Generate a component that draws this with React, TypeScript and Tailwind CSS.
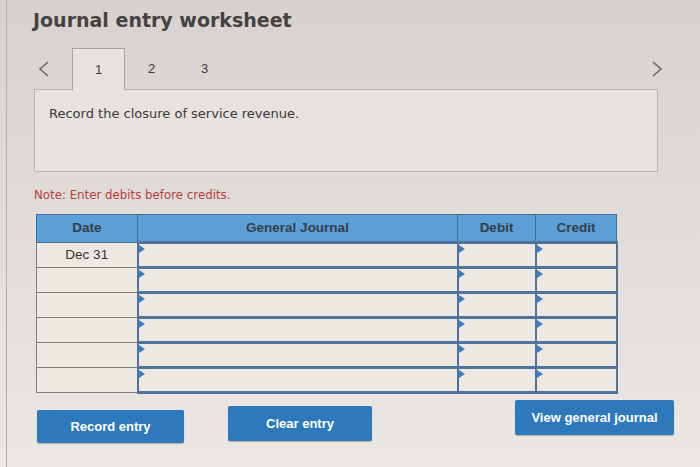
import React from "react";

const rows = ["Dec 31", "", "", "", "", ""];

function Flag() {
  return (
    <span className="absolute left-0 top-[1px] h-0 w-0 border-y-[4px] border-l-[6px] border-y-transparent border-l-[#3a7fc6]" />
  );
}

function Chevron({ dir }: { dir: "left" | "right" }) {
  return (
    <svg width="12" height="16" viewBox="0 0 12 16" className="shrink-0">
      <polyline
        points={dir === "left" ? "10,1 2,8 10,15" : "2,1 10,8 2,15"}
        fill="none"
        stroke="#6b6663"
        strokeWidth="1.6"
      />
    </svg>
  );
}

export default function App() {
  return (
    <div className="h-[467px] w-[700px] overflow-hidden bg-linear-to-b from-[#d8d2ce] to-[#ebe7e3] font-['DejaVu_Sans',sans-serif]">
      <div className="ml-[6px] h-full border-l border-[#b3ada9] pl-[27px]">
        <div className="w-[624px]">
          <h1 className="pt-[8px] text-[19px] font-bold leading-[24px] text-[#454240] -ml-[1px]">
            Journal entry worksheet
          </h1>

          {/* tabs */}
          <div className="relative z-10 mt-[16px] -mr-[6px] flex h-[41px] items-end">
            <div className="flex h-full w-[38px] items-center pl-[4px]">
              <Chevron dir="left" />
            </div>
            <div className="-mb-px flex h-[42px] w-[53px] items-center justify-center border border-b-0 border-[#a8a39f] bg-[#e6e2de] font-['Liberation_Sans',sans-serif] text-[13px] text-[#3d3a38]">
              1
            </div>
            <div className="flex h-full w-[53px] items-center justify-center font-['Liberation_Sans',sans-serif] text-[13px] text-[#3d3a38]">
              2
            </div>
            <div className="flex h-full w-[53px] items-center justify-center font-['Liberation_Sans',sans-serif] text-[13px] text-[#3d3a38]">
              3
            </div>
            <div className="flex-1" />
            <div className="flex h-full items-center pr-[1px]">
              <Chevron dir="right" />
            </div>
          </div>

          {/* question box */}
          <div className="h-[83px] border border-[#b9b4b0] bg-[#e6e2de] px-[14px] pt-[15px]">
            <p className="text-[13px] leading-[18px] text-[#3b3937]">
              Record the closure of service revenue.
            </p>
          </div>

          <p className="mt-[16px] text-[11.8px] leading-[14px] text-[#b9403f]">
            Note: Enter debits before credits.
          </p>

          {/* journal table */}
          <table className="ml-[2px] mt-[12px] w-[580px] table-fixed border-collapse font-['Liberation_Sans',sans-serif]">
            <colgroup>
              <col className="w-[101px]" />
              <col className="w-[320px]" />
              <col className="w-[78px]" />
              <col className="w-[81px]" />
            </colgroup>
            <thead>
              <tr className="h-[28px] bg-[#5b9fd6] text-[13.5px] font-bold text-[#34404c]">
                <th className="border border-[#416f98] font-bold">Date</th>
                <th className="border border-[#416f98] font-bold">General Journal</th>
                <th className="border border-[#416f98] font-bold">Debit</th>
                <th className="border border-[#416f98] font-bold">Credit</th>
              </tr>
            </thead>
            <tbody>
              {rows.map((d, i) => (
                <tr key={i} className="h-[25px] bg-[#eee8e2]">
                  <td className="border border-[#7f7c79] text-center text-[13.5px] text-[#333]">
                    {d}
                  </td>
                  <td className="relative border-x-2 border-y-[3px] border-[#4f739a]">
                    <Flag />
                  </td>
                  <td className="relative border-x-2 border-y-[3px] border-[#4f739a]">
                    <Flag />
                  </td>
                  <td className="relative border-x-2 border-y-[3px] border-[#4f739a]">
                    <Flag />
                  </td>
                </tr>
              ))}
            </tbody>
          </table>

          {/* actions */}
          <div className="mt-[6px] flex items-start font-['Liberation_Sans',sans-serif] text-[13px] font-bold text-white">
            <button className="ml-[3px] mt-[10px] h-[33px] w-[147px] rounded-[2px] bg-[#2d79bb] shadow-[0_1px_1px_rgba(0,0,0,0.25)]">
              Record entry
            </button>
            <button className="ml-[44px] mt-[6px] h-[35px] w-[144px] rounded-[2px] bg-[#2d79bb] shadow-[0_1px_1px_rgba(0,0,0,0.25)]">
              Clear entry
            </button>
            <div className="flex-1" />
            <button className="-mr-[16px] h-[35px] w-[159px] rounded-[2px] bg-[#2d79bb] shadow-[0_1px_1px_rgba(0,0,0,0.25)]">
              View general journal
            </button>
          </div>
        </div>
      </div>
    </div>
  );
}
